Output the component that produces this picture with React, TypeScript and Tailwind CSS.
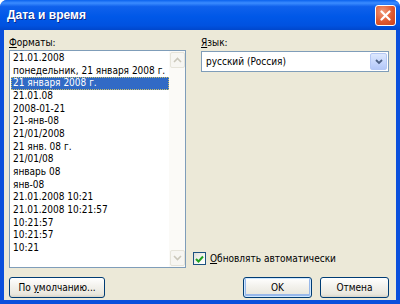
import React from 'react';

const formats = [
  '21.01.2008',
  'понедельник, 21 января 2008 г.',
  '21 января 2008 г.',
  '21.01.08',
  '2008-01-21',
  '21-янв-08',
  '21/01/2008',
  '21 янв. 08 г.',
  '21/01/08',
  'январь 08',
  'янв-08',
  '21.01.2008 10:21',
  '21.01.2008 10:21:57',
  '10:21:57',
  '10:21:57',
  '10:21',
];

function XpButton({ children, className = '' }: { children: React.ReactNode; className?: string }) {
  return (
    <div
      className={`h-[21px] flex items-center justify-center rounded-[3px] border border-[#003c74] bg-[linear-gradient(to_bottom,#ffffff_0%,#f4f3ee_40%,#e9e7de_85%,#d8d4c8_100%)] text-black ${className}`}
    >
      <span>{children}</span>
    </div>
  );
}

function ScrollArrow({ up }: { up?: boolean }) {
  return (
    <div className="h-[16px] w-[15px] flex items-center justify-center rounded-[2px] bg-[#f7f6f2] border border-[#e6e4da]">
      <svg width="9" height="6" viewBox="0 0 9 6">
        <path
          d={up ? 'M1 5 L4.5 1.5 L8 5' : 'M1 1 L4.5 4.5 L8 1'}
          fill="none"
          stroke="#cbc8bb"
          strokeWidth="1.6"
        />
      </svg>
    </div>
  );
}

export default function App() {
  return (
    <div className="w-[400px] h-[304px] flex flex-col bg-[#0a4fdc] rounded-t-[7px] overflow-hidden font-['DejaVu_Sans_Condensed','DejaVu_Sans',sans-serif] text-[10px] text-black">
      {/* Title bar */}
      <div className="h-[30px] shrink-0 flex items-center justify-between pl-[7px] pr-[4px] bg-[linear-gradient(to_bottom,#0a62ee_0%,#3b8cff_10%,#0f61ec_22%,#0058e8_55%,#0052e0_85%,#0047cc_100%)]">
        <span className="text-white font-bold text-[12px] font-['Liberation_Sans',sans-serif] [text-shadow:1px_1px_0_#0a2a8c]">
          Дата и время
        </span>
        <div className="w-[21px] h-[21px] rounded-[3px] border border-white bg-[radial-gradient(circle_at_35%_30%,#f19a7a_0%,#e0592f_55%,#c9411b_100%)] flex items-center justify-center">
          <svg width="11" height="11" viewBox="0 0 11 11">
            <path d="M1.5 1.5 L9.5 9.5 M9.5 1.5 L1.5 9.5" stroke="#ffffff" strokeWidth="2.2" strokeLinecap="round" />
          </svg>
        </div>
      </div>

      {/* Body */}
      <div className="flex-1 mx-[4px] mb-[4px] bg-[#ece9d8] flex flex-col pl-[5px] pr-[7px]">
        <div className="flex pt-[7px]">
          {/* Formats */}
          <div className="w-[177px] flex flex-col">
            <div className="h-[12px] leading-[12px]">
              <span className="underline">Ф</span>орматы:
            </div>
            <div className="mt-[1px] h-[218px] border border-[#7f9db9] bg-white flex">
              <div className="flex-1 pt-[1px] pl-[1px] overflow-hidden">
                {formats.map((f, i) => (
                  <div
                    key={i}
                    className={`h-[12.67px] leading-[12.67px] pl-[2px] whitespace-nowrap ${
                      i === 2 ? 'bg-[#316ac5] text-white outline-1 outline-dotted outline-[#c9c06a] -outline-offset-1' : ''
                    }`}
                  >
                    {f}
                  </div>
                ))}
              </div>
              <div className="w-[16px] bg-[#fbfaf7] flex flex-col justify-between py-[1px] pl-[1px]">
                <ScrollArrow up />
                <ScrollArrow />
              </div>
            </div>
          </div>

          {/* Language */}
          <div className="ml-[15px] flex-1 flex flex-col">
            <div className="h-[12px] leading-[12px]">
              <span className="underline">Я</span>зык:
            </div>
            <div className="mt-[2px] h-[21px] border border-[#7f9db9] bg-white flex items-center justify-between pl-[4px] pr-[1px]">
              <span>русский (Россия)</span>
              <div className="w-[17px] h-[17px] rounded-[2px] border border-[#b5c8f5] bg-[linear-gradient(to_bottom,#dde8fe_0%,#c4d5fc_60%,#b4c8f8_100%)] flex items-center justify-center">
                <svg width="8" height="6" viewBox="0 0 8 6">
                  <path d="M1 1 L4 4 L7 1" fill="none" stroke="#4d6185" strokeWidth="1.8" />
                </svg>
              </div>
            </div>
            <div className="flex-1" />
            <div className="-ml-[8px] mb-[2px] flex items-center gap-[4px]">
              <div className="w-[13px] h-[13px] border border-[#1c5180] bg-[linear-gradient(135deg,#dcdcd6_0%,#f4f4f0_50%,#ffffff_100%)] flex items-center justify-center">
                <svg width="9" height="8" viewBox="0 0 9 8">
                  <path d="M1 4 L3.5 6.5 L8 1.5" fill="none" stroke="#21a121" strokeWidth="2" />
                </svg>
              </div>
              <span>
                <span className="underline">О</span>бновлять автоматически
              </span>
            </div>
          </div>
        </div>

        {/* Buttons */}
        <div className="mt-[9px] flex items-center">
          <XpButton className="w-[96px]">
            По <span className="underline">у</span>молчанию...
          </XpButton>
          <div className="flex-1" />
          <XpButton className="w-[69px] shadow-[inset_0_0_0_1px_#cee7ff,inset_0_-1px_0_2px_#98b8ea]">OK</XpButton>
          <XpButton className="w-[69px] ml-[8px]">Отмена</XpButton>
        </div>
      </div>
    </div>
  );
}
